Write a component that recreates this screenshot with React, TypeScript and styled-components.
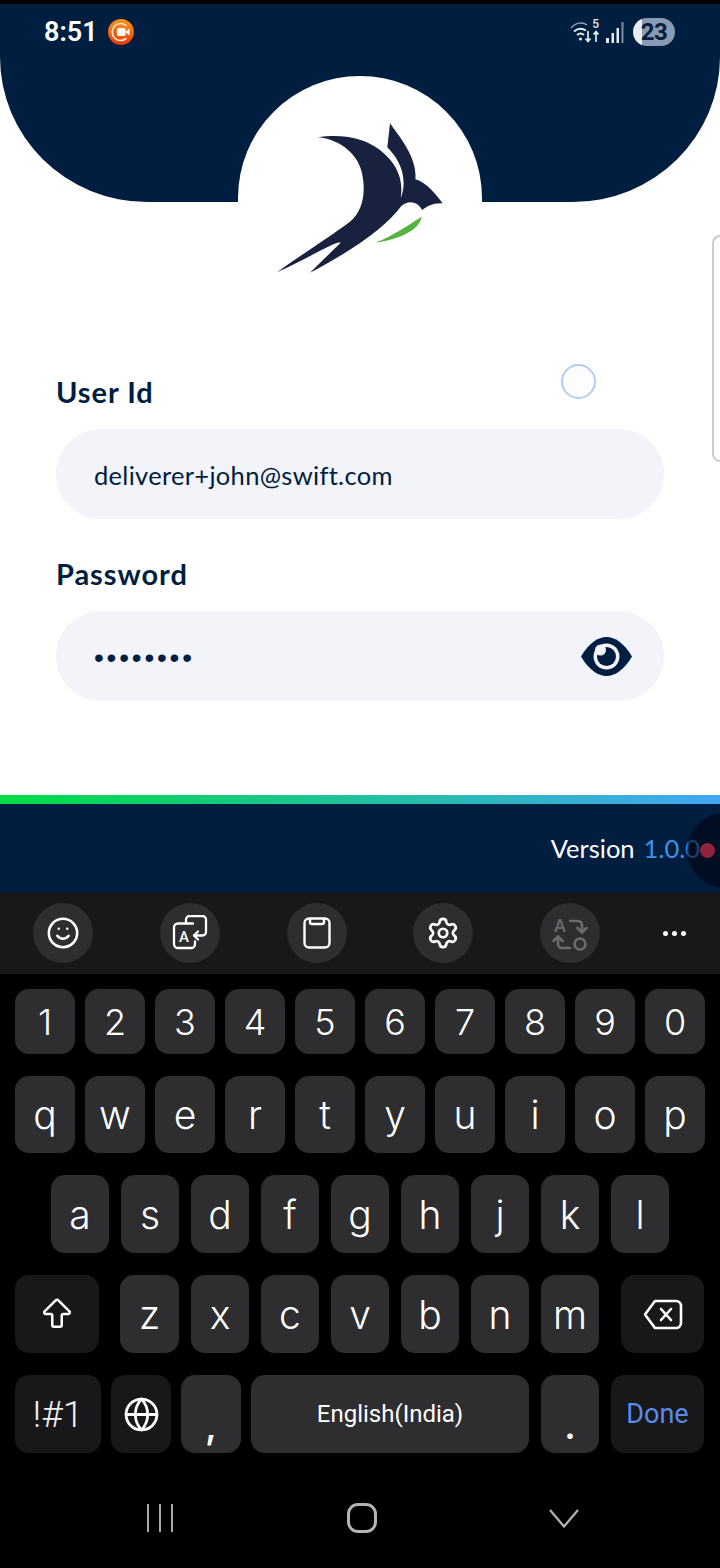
import * as React from 'react';
import styled, { createGlobalStyle } from 'styled-components';
import { ArrowBigUp, Globe, Settings, Smile } from 'lucide-react';

const navy = '#001e40';
const appFont = `Lato, "Open Sans", sans-serif`;
const deviceFont = `Roboto, "Liberation Sans", sans-serif`;
const keyFont = `Inter, Roboto, sans-serif`;

const GlobalStyle = createGlobalStyle`
	html, body {
		margin: 0;
		padding: 0;
		background: #000;
	}
`;

const Page = styled.div`
	display: flex;
	flex-direction: column;
	width: 720px;
	height: 1568px;
	overflow: hidden;
	background: #fff;
`;

const TopEdge = styled.div`
	height: 4px;
	flex-shrink: 0;
	background: #000;
`;

const Header = styled.header`
	position: relative;
	z-index: 1;
	height: 198px;
	flex-shrink: 0;
	background: ${navy};
	border-radius: 0 0 147px 147px / 0 0 145px 145px;
`;

const StatusBar = styled.div`
	display: flex;
	align-items: center;
	justify-content: space-between;
	height: 56px;
	padding: 0 45px 0 44px;
`;

const StatusGroup = styled.div`
	display: flex;
	align-items: center;
`;

const Clock = styled.span`
	color: #fff;
	font: 600 27px ${deviceFont};
	margin-right: 10px;
`;

const Battery = styled.div`
	display: flex;
	align-items: center;
	justify-content: center;
	width: 42px;
	height: 28px;
	margin-left: 9px;
	border-radius: 14px;
	background: linear-gradient(90deg, #e9edf0 22%, #8a9ab0 22%);
	color: ${navy};
	font: 700 24px ${deviceFont};
	letter-spacing: -0.5px;
`;

const WifiWrap = styled.div`
	position: relative;
	width: 30px;
	height: 24px;
`;

const WifiBand = styled.span`
	position: absolute;
	top: -3px;
	right: 1px;
	color: #e6e9ee;
	font: 500 12px ${deviceFont};
`;

const Dome = styled.div`
	position: absolute;
	left: 238px;
	bottom: 0;
	width: 244px;
	height: 126px;
	background: #fff;
	border-radius: 122px 122px 0 0;
`;

const LogoMark = styled.svg`
	position: absolute;
	left: 2px;
	top: 24px;
	width: 240px;
	height: 190px;
`;

const Main = styled.main`
	position: relative;
	display: flex;
	flex-direction: column;
	height: 593px;
	flex-shrink: 0;
	box-sizing: border-box;
	background: #fff;
	padding: 174px 56px 0;
`;

const FieldLabel = styled.label`
	height: 34px;
	color: ${navy};
	font: 700 29px/32px ${appFont};
	letter-spacing: 0.95px;
`;

const Field = styled.div`
	display: flex;
	align-items: center;
	justify-content: space-between;
	flex-shrink: 0;
	height: 90px;
	margin: 19px 0 39px;
	padding: 1px 32px 0 38px;
	box-sizing: border-box;
	border-radius: 45px;
	background: #f3f3fa;
	color: ${navy};
	font: 400 25.5px ${appFont};
	letter-spacing: 0.3px;
`;

const Dots = styled.span`
	padding-top: 3px;
	font: 400 28px "Liberation Sans", sans-serif;
	letter-spacing: 2.8px;
`;

const EdgeHandle = styled.div`
	position: absolute;
	top: 33px;
	right: 0;
	width: 8px;
	height: 227px;
	border: 2px solid #c9ccd0;
	border-right: 0;
	border-radius: 8px 0 0 8px;
	box-sizing: border-box;
`;

const TouchDot = styled.div`
	position: absolute;
	top: 162px;
	left: 561px;
	width: 35px;
	height: 35px;
	border: 2px solid #b4cdef;
	border-radius: 50%;
	background: #fdfdfe;
	box-sizing: border-box;
`;

const GradientBar = styled.div`
	height: 9px;
	flex-shrink: 0;
	background: linear-gradient(90deg, #00dc45 0%, #42a6f5 100%);
`;

const Footer = styled.footer`
	position: relative;
	display: flex;
	align-items: center;
	justify-content: flex-end;
	height: 88px;
	flex-shrink: 0;
	padding: 0 20px 0 0;
	box-sizing: border-box;
	overflow: hidden;
	background: ${navy};
	color: #fff;
	font: 400 25.5px ${appFont};
`;

const VersionNumber = styled.span`
	margin-left: 9px;
	color: #3f92e4;
`;

const FloatingBubble = styled.div`
	position: absolute;
	top: 9px;
	right: -42px;
	width: 75px;
	height: 75px;
	border-radius: 50%;
	background: rgba(0, 0, 10, 0.55);
`;

const RecordDot = styled.div`
	position: absolute;
	top: 39px;
	right: 5px;
	width: 15px;
	height: 15px;
	border-radius: 50%;
	background: #8f2340;
`;

const Toolbar = styled.div`
	display: flex;
	align-items: center;
	height: 82px;
	flex-shrink: 0;
	padding-left: 33px;
	gap: 66.8px;
	background: #18181a;
`;

const ToolButton = styled.div`
	display: flex;
	align-items: center;
	justify-content: center;
	width: 60px;
	height: 60px;
	border-radius: 50%;
	background: #2e2e30;
	color: #fff;
`;

const MoreDots = styled.div`
	display: flex;
	gap: 4px;
	margin-left: -4px;
`;

const MoreDot = styled.span`
	width: 5px;
	height: 5px;
	border-radius: 50%;
	background: #fff;
`;

const Keyboard = styled.section`
	flex: 1;
	display: flex;
	flex-direction: column;
	gap: 22px;
	padding: 15px 15px 0 15px;
	background: #000;
`;

const KeyRow = styled.div<{ $height: number; $gap?: number; $inset?: number }>`
	display: flex;
	height: ${({ $height }) => $height}px;
	gap: ${({ $gap }) => $gap ?? 10}px;
	padding-left: ${({ $inset }) => $inset ?? 0}px;
`;

const Key = styled.div<{ $width?: number; $dark?: boolean; $size?: number; $color?: string; $before?: number; $after?: number }>`
	display: flex;
	align-items: center;
	justify-content: center;
	flex-shrink: 0;
	width: ${({ $width }) => $width ?? 60}px;
	margin-left: ${({ $before }) => $before ?? 0}px;
	margin-right: ${({ $after }) => $after ?? 0}px;
	border-radius: 14px;
	background: ${({ $dark }) => ($dark ? '#18181a' : '#2e2e30')};
	color: ${({ $color }) => $color ?? '#fff'};
	font: 300 ${({ $size }) => $size ?? 39}px ${keyFont};
`;

const PunctuationKey = styled(Key)`
	align-items: flex-end;
	padding-bottom: 5px;
	box-sizing: border-box;
	font-weight: 600;
`;

const LabelKey = styled(Key)`
	font-family: ${deviceFont};
	font-weight: 400;
`;

const SymbolKey = styled(LabelKey)`
	font-weight: 300;
	color: #f0f0f0;
`;

const NavBar = styled.nav`
	display: grid;
	grid-template-columns: repeat(3, 202px);
	justify-items: center;
	align-items: center;
	height: 32px;
	margin: 27px 0 0 44px;
`;

const RecentLines = styled.div`
	display: flex;
	gap: 10px;
	height: 28px;
`;

const RecentLine = styled.span`
	width: 2px;
	background: #a9a9a9;
`;

const HomeButton = styled.div`
	width: 30px;
	height: 30px;
	border: 3px solid #b4b4b4;
	border-radius: 11px;
	box-sizing: border-box;
`;

const numbers = ['1', '2', '3', '4', '5', '6', '7', '8', '9', '0'];
const topLetters = ['q', 'w', 'e', 'r', 't', 'y', 'u', 'i', 'o', 'p'];
const midLetters = ['a', 's', 'd', 'f', 'g', 'h', 'j', 'k', 'l'];
const lowLetters = ['x', 'c', 'v', 'b', 'n', 'm'];

const BirdLogo = () => (
	<LogoMark viewBox="0 0 720 570">
		<path
			fill="#18223f"
			d="M232 112 C295 102 365 108 420 150 C468 188 492 235 482 295 C496 262 500 200 442 142 L450 70 C490 125 532 180 526 238 C560 248 585 280 608 310 C580 308 562 318 546 330 C535 305 505 298 484 318 C440 378 350 445 210 518 L302 428 C290 420 200 478 112 516 C190 460 270 410 330 365 C372 330 378 270 365 215 C350 155 290 115 232 112 Z"
		/>
		<path fill="#55b33e" d="M545 350 C540 388 480 418 405 428 C455 410 500 378 545 350 Z" />
	</LogoMark>
);

const RecorderIcon = () => (
	<svg width="26" height="26" viewBox="0 0 26 26">
		<defs>
			<linearGradient id="rec" x1="0" y1="0" x2="0" y2="1">
				<stop offset="0" stopColor="#f8981a" />
				<stop offset="1" stopColor="#e8380a" />
			</linearGradient>
		</defs>
		<circle cx="13" cy="13" r="13" fill="url(#rec)" />
		<path d="M18.5 6.8 A8.5 8.5 0 1 0 18.5 19.2" fill="none" stroke="#ffe9d6" strokeWidth="1.6" />
		<rect x="9" y="9" width="8.5" height="8" rx="1.5" fill="#fff" />
		<path d="M17 13 L21.5 9.6 V16.4 Z" fill="#fff" />
	</svg>
);

const WifiIcon = () => (
	<WifiWrap>
		<svg width="30" height="24" viewBox="0 0 30 24" fill="none" stroke="#e6e9ee">
			<path d="M1 8 C6 2 13 2 17 5" strokeWidth="1.5" opacity="0.65" />
			<path d="M4 11.5 C8 8 12 8 16 10.5" strokeWidth="2" />
			<path d="M7 15 C9.5 13 12 13 14 15" strokeWidth="2" />
			<circle cx="10.5" cy="19" r="1.6" fill="#e6e9ee" stroke="none" />
			<path d="M18 11 V21 M15.5 18.5 L18 21.5 L20.5 18.5" strokeWidth="1.7" />
			<path d="M26 22 V12 M23.5 14.5 L26 11.5 L28.5 14.5" strokeWidth="1.7" />
		</svg>
		<WifiBand>5</WifiBand>
	</WifiWrap>
);

const SignalIcon = () => (
	<svg width="18" height="21" viewBox="0 0 18 21" style={{ marginLeft: 6 }}>
		<rect x="0" y="16" width="3" height="5" fill="#e6e9ee" />
		<rect x="5.5" y="11" width="2.5" height="10" fill="#e6e9ee" />
		<rect x="10.5" y="6" width="2.5" height="15" fill="#e6e9ee" />
		<rect x="15.5" y="0" width="2" height="21" fill="#7f8ea3" />
	</svg>
);

const EyeIcon = () => (
	<svg width="51" height="39" viewBox="0 0 51 39">
		<path fill={navy} d="M0 19.5 C8 6 17 0 25.5 0 C34 0 43 6 51 19.5 C43 33 34 39 25.5 39 C17 39 8 33 0 19.5 Z" />
		<circle cx="25.5" cy="19.5" r="13" fill="#f3f3fa" />
		<circle cx="25.5" cy="19.5" r="9.5" fill={navy} />
		<circle cx="19.5" cy="13" r="5.5" fill="#f3f3fa" />
	</svg>
);

const TranslateIcon = () => (
	<svg width="36" height="36" viewBox="0 0 36 36" fill="none" stroke="#fff" strokeWidth="2.3" strokeLinecap="round" strokeLinejoin="round">
		<path d="M14 8 V4.5 A3.5 3.5 0 0 1 17.5 1 H30.5 A3.5 3.5 0 0 1 34 4.5 V17 A3.5 3.5 0 0 1 30.5 20.5 H22" />
		<path d="M26 16.5 L22 20.5 L26 24.5" />
		<path d="M21 8.5 H6 A4 4 0 0 0 2 12.5 V29 A4 4 0 0 0 6 33 H19 A4 4 0 0 0 23 29 V26.5" />
		<text x="12" y="27" textAnchor="middle" fill="#fff" stroke="none" fontFamily="Roboto, sans-serif" fontSize="15" fontWeight="500">A</text>
	</svg>
);

const ClipboardIcon = () => (
	<svg width="28" height="32" viewBox="0 0 28 32" fill="none" stroke="#fff" strokeWidth="2.4" strokeLinejoin="round">
		<rect x="1.5" y="1.5" width="25" height="29" rx="4.5" />
		<path d="M7 1.5 V5 A2 2 0 0 0 9 7 H19 A2 2 0 0 0 21 5 V1.5" />
	</svg>
);

const ConvertIcon = () => (
	<svg width="36" height="39" viewBox="0 -3 36 39" fill="none" stroke="#6c6c6e" strokeWidth="2.6" strokeLinecap="round" strokeLinejoin="round">
		<text x="8" y="15" textAnchor="middle" fill="#6c6c6e" stroke="none" fontFamily="Roboto, sans-serif" fontSize="18" fontWeight="500">A</text>
		<path d="M18 4 H26 A4 4 0 0 1 30 8 V15 M25.5 11 L30 15.5 L34.5 11" />
		<path d="M18 31 H10 A4 4 0 0 1 6 27 V20 M1.5 24 L6 19.5 L10.5 24" />
		<circle cx="28" cy="27" r="5.5" />
	</svg>
);

const BackspaceIcon = () => (
	<svg width="40" height="31" viewBox="0 0 40 31" fill="none" stroke="#fff" strokeWidth="2.6" strokeLinecap="round" strokeLinejoin="round">
		<path d="M12 2 H33 A5 5 0 0 1 38 7 V24 A5 5 0 0 1 33 29 H12 L2 15.5 Z" />
		<path d="M18 10 L28 21 M28 10 L18 21" />
	</svg>
);

const App: React.FC = () => (
	<Page>
		<GlobalStyle />
		<TopEdge />
		<Header>
			<StatusBar>
				<StatusGroup>
					<Clock>8:51</Clock>
					<RecorderIcon />
				</StatusGroup>
				<StatusGroup>
					<WifiIcon />
					<SignalIcon />
					<Battery>23</Battery>
				</StatusGroup>
			</StatusBar>
			<Dome>
				<BirdLogo />
			</Dome>
		</Header>

		<Main>
			<FieldLabel>User Id</FieldLabel>
			<Field>deliverer+john@swift.com</Field>
			<FieldLabel>Password</FieldLabel>
			<Field>
				<Dots>••••••••</Dots>
				<EyeIcon />
			</Field>
			<EdgeHandle />
			<TouchDot />
		</Main>

		<GradientBar />
		<Footer>
			Version
			<VersionNumber>1.0.0</VersionNumber>
			<FloatingBubble />
			<RecordDot />
		</Footer>

		<Toolbar>
			<ToolButton><Smile size={34} strokeWidth={1.8} /></ToolButton>
			<ToolButton><TranslateIcon /></ToolButton>
			<ToolButton><ClipboardIcon /></ToolButton>
			<ToolButton><Settings size={34} strokeWidth={1.9} /></ToolButton>
			<ToolButton><ConvertIcon /></ToolButton>
			<MoreDots>
				<MoreDot />
				<MoreDot />
				<MoreDot />
			</MoreDots>
		</Toolbar>

		<Keyboard>
			<KeyRow $height={65}>
				{numbers.map((n) => <Key key={n} $size={36}>{n}</Key>)}
			</KeyRow>
			<KeyRow $height={77}>
				{topLetters.map((l) => <Key key={l}>{l}</Key>)}
			</KeyRow>
			<KeyRow $height={78} $gap={12} $inset={36}>
				{midLetters.map((l) => <Key key={l} $width={58}>{l}</Key>)}
			</KeyRow>
			<KeyRow $height={78} $gap={12}>
				<Key $width={84} $dark $after={9}><ArrowBigUp size={38} strokeWidth={1.6} /></Key>
				<Key $width={59}>z</Key>
				{lowLetters.map((l) => <Key key={l} $width={58}>{l}</Key>)}
				<Key $width={83} $dark $before={10}><BackspaceIcon /></Key>
			</KeyRow>
			<KeyRow $height={78}>
				<SymbolKey $width={86} $dark $size={37}>!#1</SymbolKey>
				<Key $dark><Globe size={37} strokeWidth={1.8} /></Key>
				<PunctuationKey $size={36}>,</PunctuationKey>
				<LabelKey $width={278} $size={24} $after={2}>English(India)</LabelKey>
				<PunctuationKey $width={58} $size={36} $after={2}>.</PunctuationKey>
				<LabelKey $width={93} $dark $size={27} $color="#5a8bea">Done</LabelKey>
			</KeyRow>
			<NavBar>
				<RecentLines>
					<RecentLine />
					<RecentLine />
					<RecentLine />
				</RecentLines>
				<HomeButton />
				<svg width="30" height="19" viewBox="0 0 30 19" fill="none" stroke="#b4b4b4" strokeWidth="2.2">
					<path d="M1 1 L15 17.5 L29 1" />
				</svg>
			</NavBar>
		</Keyboard>
	</Page>
);

export default App;
